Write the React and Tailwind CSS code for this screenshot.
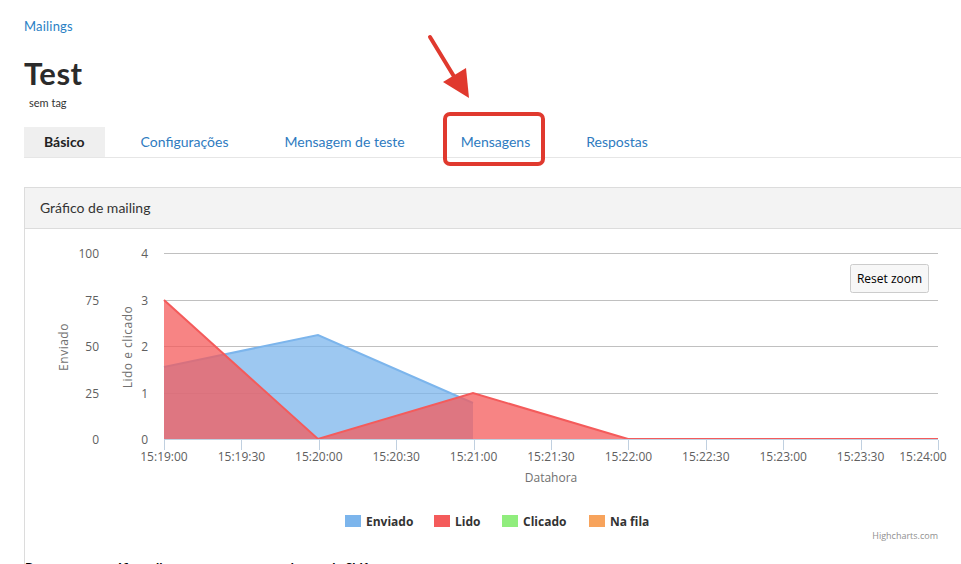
import React from "react";

const xTicks = [164, 241.4, 318.8, 396.2, 473.6, 551, 628.4, 705.8, 783.2, 860.6, 938];
const xLabels = ["15:19:00", "15:19:30", "15:20:00", "15:20:30", "15:21:00", "15:21:30", "15:22:00", "15:22:30", "15:23:00", "15:23:30", "15:24:00"];
const grid = [253, 300, 346, 393];
const yLeft = [["100", 253], ["75", 300], ["50", 346], ["25", 393], ["0", 439]];
const yRight = [["4", 253], ["3", 300], ["2", 346], ["1", 393], ["0", 439]];

function Chart() {
  const f = { fontFamily: "'Open Sans', 'DejaVu Sans', sans-serif" };
  return (
    <svg width="936" height="331" viewBox="25 229 936 331" className="block" style={f}>
      {grid.map((y) => (
        <line key={y} x1="164" x2="938" y1={y + 0.5} y2={y + 0.5} stroke="#c0c0c0" strokeWidth="1" />
      ))}
      <path d="M164,367 L318,335 L473,403 L473,439.5 L164,439.5 Z" fill="#7cb5ec" fillOpacity="0.75" />
      <path d="M164,367 L318,335 L473,403" fill="none" stroke="#7cb5ec" strokeWidth="2" />
      <path d="M164,300 L318,439 L473,393 L628,439 L938,439 L938,439.5 L164,439.5 Z" fill="#f45b5b" fillOpacity="0.75" />
      <path d="M164,300 L318,439 L473,393 L628,439 L938,439" fill="none" stroke="#f45b5b" strokeWidth="2" />
      <line x1="164" x2="938" y1="439.5" y2="439.5" stroke="#c0d0e0" strokeWidth="1" />
      {xTicks.map((x) => (
        <line key={x} x1={Math.round(x) + 0.5} x2={Math.round(x) + 0.5} y1="440" y2="450" stroke="#c0d0e0" strokeWidth="1" />
      ))}
      {xLabels.map((t, i) => (
        <text key={t} x={i === 10 ? 923 : xTicks[i]} y="460.5" textAnchor="middle" fontSize="12" fill="#606060">{t}</text>
      ))}
      {yLeft.map(([t, y]) => (
        <text key={"l" + t} x="99" y={y + 4.5} textAnchor="end" fontSize="12" fill="#606060">{t}</text>
      ))}
      {yRight.map(([t, y]) => (
        <text key={"r" + t} x="148" y={y + 4.5} textAnchor="end" fontSize="12" fill="#606060">{t}</text>
      ))}
      <text x="0" y="0" transform="translate(68 347) rotate(-90)" textAnchor="middle" fontSize="12" fill="#707070" letterSpacing="0.5">Enviado</text>
      <text x="0" y="0" transform="translate(132 347) rotate(-90)" textAnchor="middle" fontSize="12" fill="#707070" letterSpacing="0.5">Lido e clicado</text>
      <text x="551" y="482" textAnchor="middle" fontSize="12" fill="#707070">Datahora</text>

      <rect x="850.5" y="264.5" width="78" height="28" rx="2" fill="#f7f7f7" stroke="#cccccc" />
      <text x="889.5" y="283" textAnchor="middle" fontSize="12" fill="#000">Reset zoom</text>

      <rect x="345" y="515" width="16" height="12" fill="#7cb5ec" />
      <text x="366" y="526" fontSize="12" fontWeight="700" fill="#333">Enviado</text>
      <rect x="434" y="515" width="16" height="12" fill="#f45b5b" />
      <text x="455" y="526" fontSize="12" fontWeight="700" fill="#333">Lido</text>
      <rect x="502" y="515" width="16" height="12" fill="#90ed7d" />
      <text x="523" y="526" fontSize="12" fontWeight="700" fill="#333">Clicado</text>
      <rect x="589" y="515" width="16" height="12" fill="#f7a35c" />
      <text x="610" y="526" fontSize="12" fontWeight="700" fill="#333">Na fila</text>
      <text x="938" y="539" textAnchor="end" fontSize="9" fill="#909090">Highcharts.com</text>
    </svg>
  );
}

export default function App() {
  const tabs = ["Configurações", "Mensagem de teste", "Mensagens", "Respostas"];
  return (
    <div className="relative w-[961px] h-[564px] overflow-hidden bg-white pl-[24px]" style={{ fontFamily: "Lato, 'Open Sans', sans-serif" }}>
      <div className="pt-[18px] text-[13px] leading-4 text-[#2a7fc4] tracking-[0.2px]">Mailings</div>
      <h1 className="mt-[23px] text-[31px] leading-[32px] font-bold text-[#2b2b2b] tracking-[0.5px]">Test</h1>
      <div className="mt-[7px] pl-[5px] text-[11px] leading-[14px] text-[#333]">sem tag</div>
      <div className="mt-[17px] flex gap-[16px] border-b border-[#e6e6e6] w-[937px]">
        <div className="h-[30px] px-5 pb-[2px] bg-[#efefef] flex items-center text-[14px] font-bold text-[#222]">Básico</div>
        {tabs.map((t) => (
          <div key={t} className="h-[30px] px-5 pb-[2px] flex items-center text-[14px] text-[#2e7bbf]">{t}</div>
        ))}
      </div>
      <div className="mt-[29px] w-[980px] border border-[#dcdcdc]">
        <div className="h-[41px] pb-[2px] bg-[#f3f3f3] border-b border-[#dcdcdc] flex items-center pl-[15px] text-[14px] text-[#333]">Gráfico de mailing</div>
        <Chart />
        <div className="text-[13px] font-bold text-black leading-4">Para mover o gráfico, clique e arraste segurando a tecla Shift.</div>
      </div>

      <div className="absolute left-[443px] top-[112px] w-[102px] h-[54px] border-[4px] border-[#e0392e] rounded-[7px]" />
      <svg className="absolute left-[420px] top-[30px]" width="60" height="80" viewBox="420 30 60 80">
        <line x1="430" y1="37" x2="458" y2="83" stroke="#e0392e" strokeWidth="4" strokeLinecap="round" />
        <polygon points="443,82 466,68 469,98" fill="#e0392e" />
      </svg>
    </div>
  );
}
